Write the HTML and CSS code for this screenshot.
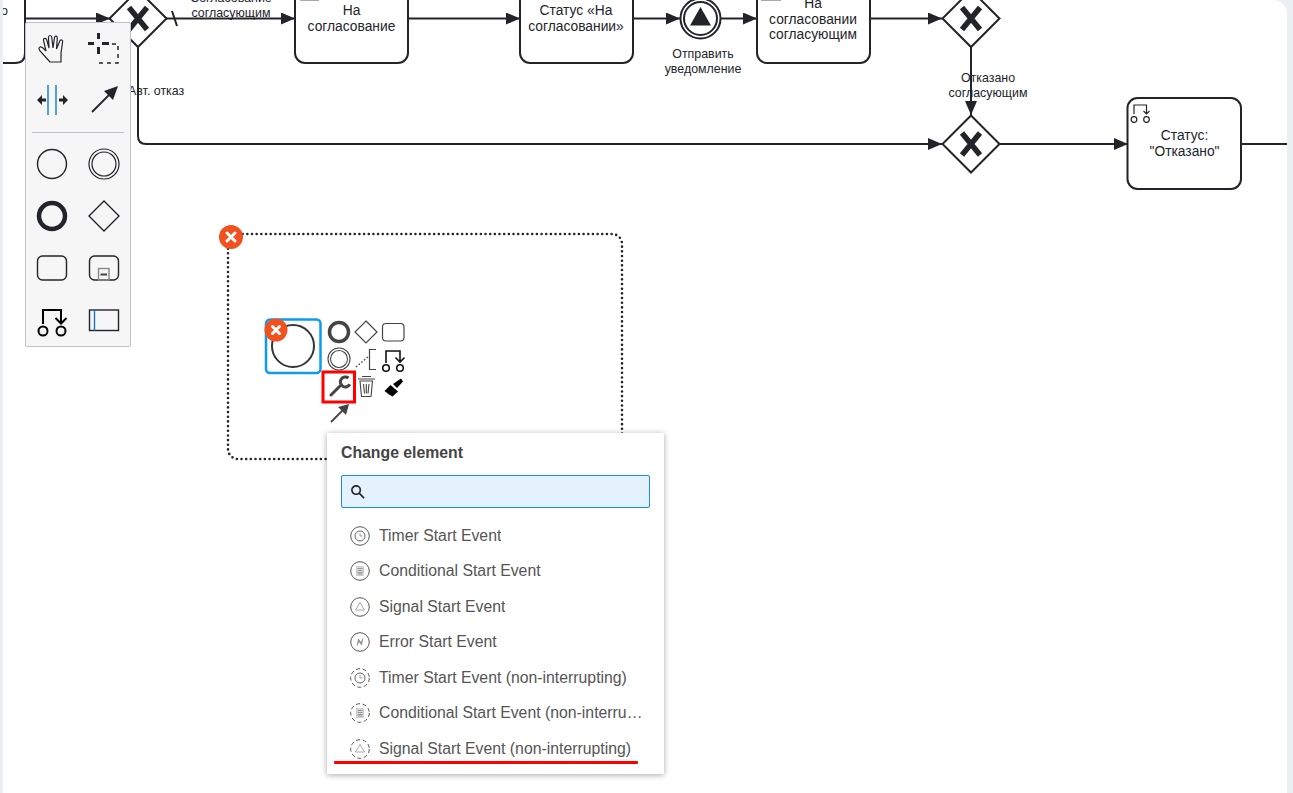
FILE: index.html
```html
<!DOCTYPE html>
<html lang="ru">
<head>
    <meta charset="UTF-8">
    <title>Change element</title>
    <link rel="stylesheet" href="styles.css">
</head>
<body>

<svg class="defs" width="0" height="0">
    <defs>
        <marker id="arrow" viewBox="0 0 14 12" refX="14" refY="6" markerWidth="14" markerHeight="12" markerUnits="userSpaceOnUse" orient="auto">
            <path d="M0 0 L14 6 L0 12 Z" fill="#22242a"/>
        </marker>
        <symbol id="ring" viewBox="0 0 20 20"><circle cx="10" cy="10" r="9.3" fill="none" stroke="#555" stroke-width="1"/></symbol>
        <symbol id="ring-dash" viewBox="0 0 20 20"><circle cx="10" cy="10" r="9.3" fill="none" stroke="#555" stroke-width="1" stroke-dasharray="4 2.6"/></symbol>
        <symbol id="timer" viewBox="0 0 20 20"><circle cx="10" cy="10" r="5" fill="none" stroke="#666" stroke-width="1"/><path d="M10 7 V10 H12.5" fill="none" stroke="#888" stroke-width=".8"/></symbol>
        <symbol id="cond" viewBox="0 0 20 20"><rect x="6.5" y="5.5" width="7" height="9" fill="#ddd" stroke="#bbb" stroke-width=".6"/><path d="M7.5 7.5 H12.5 M7.5 9.5 H12.5 M7.5 11.5 H12.5 M7.5 13 H12.5" stroke="#777" stroke-width=".7"/></symbol>
        <symbol id="signal" viewBox="0 0 20 20"><path d="M10 5.5 L14.5 13 H5.500 Z" fill="none" stroke="#aaa" stroke-width="1"/></symbol>
        <symbol id="error" viewBox="0 0 20 20"><path d="M7 13.500 L8.500 7 L11 10.500 L13 6.500 L11.500 13 L9 9.500 Z" fill="#999" stroke="#777" stroke-width=".5"/></symbol>
    </defs>
</svg>

<div class="canvas">

    <svg class="diagram" width="1284" height="793" viewBox="3 0 1284 793">
        <g class="shape">
            <path d="M25 -10 V53 Q25 63 15 63 H3"/>
            <rect x="295" y="-30" width="113" height="93" rx="10"/>
            <rect x="520" y="-30" width="113" height="93" rx="10"/>
            <rect x="757" y="-30" width="113" height="93" rx="10"/>
            <rect x="1127.500" y="98" width="113.500" height="91" rx="10"/>
            <path d="M138 -10 L166.500 18.500 L138 47 L109.500 18.500 Z"/>
            <path d="M971 -10 L999.500 18.500 L971 47 L942.500 18.500 Z"/>
            <path d="M971 115.500 L999.500 144 L971 172.500 L942.500 144 Z"/>
            <circle cx="700.500" cy="18.500" r="20"/>
            <circle cx="700.500" cy="18.500" r="16.500"/>
        </g>
        <path d="M690 25.500 L700.500 7 L711 25.500 Z" fill="#22242a"/>

        <g class="flow">
            <path d="M25 18.500 H110" marker-end="url(#arrow)"/>
            <path d="M166 18.500 H295" marker-end="url(#arrow)"/>
            <path d="M172 11 L177 26"/>
            <path d="M408 18.500 H520" marker-end="url(#arrow)"/>
            <path d="M633 18.500 H680" marker-end="url(#arrow)"/>
            <path d="M721 18.500 H757" marker-end="url(#arrow)"/>
            <path d="M870 18.500 H942" marker-end="url(#arrow)"/>
            <path d="M971 47 V115" marker-end="url(#arrow)"/>
            <path d="M138 46 V136 Q138 144 146 144 H942" marker-end="url(#arrow)"/>
            <path d="M999 144 H1128" marker-end="url(#arrow)"/>
            <path d="M1241 144 H1287"/>
        </g>

        <g class="cross">
            <path d="M129 7.500 L147 29.500 M147 7.500 L129 29.500"/>
            <path d="M962 7.500 L980 29.500 M980 7.500 L962 29.500"/>
            <path d="M962 133 L980 155 M980 133 L962 155"/>
        </g>

        <path d="M300 .5 H319 M761 .5 H781" stroke="#aaa" stroke-width="1"/>

        <!-- маленькая иконка в статусе -->
        <g fill="none" stroke="#22242a" stroke-width="1.200">
            <circle cx="1134" cy="119.500" r="2.800"/>
            <circle cx="1146.500" cy="119.500" r="2.800"/>
            <path d="M1134 114 V105 H1146.500 V114 M1143.500 111 L1146.500 114 L1149.500 111"/>
        </g>

        <g class="task-text">
            <text x="1" y="15" class="label">о</text>
            <text x="351.500" y="15" text-anchor="middle">На</text>
            <text x="351.500" y="31" text-anchor="middle">согласование</text>
            <text x="576" y="15" text-anchor="middle">Статус «На</text>
            <text x="576" y="31" text-anchor="middle">согласовании»</text>
            <text x="813" y="8" text-anchor="middle">На</text>
            <text x="813" y="24" text-anchor="middle">согласовании</text>
            <text x="813" y="39" text-anchor="middle">согласующим</text>
            <text x="1184.500" y="140" text-anchor="middle">Статус:</text>
            <text x="1184.500" y="156" text-anchor="middle">"Отказано"</text>
        </g>
        <g class="label">
            <text x="231" y="2" text-anchor="middle">Согласование</text>
            <text x="231" y="17" text-anchor="middle">согласующим</text>
            <text x="128" y="95">Авт. отказ</text>
            <text x="703" y="58" text-anchor="middle">Отправить</text>
            <text x="703" y="73" text-anchor="middle">уведомление</text>
            <text x="988" y="82" text-anchor="middle">Отказано</text>
            <text x="988" y="97" text-anchor="middle">согласующим</text>
        </g>

        <!-- подпроцесс -->
        <rect x="228" y="234" width="394" height="225" rx="10" class="dotted"/>
        <circle cx="231" cy="237" r="12" fill="#f1511e"/>
        <path d="M227 233 L235 241 M235 233 L227 241" stroke="#fff" stroke-width="3" stroke-linecap="round"/>

        <rect x="266" y="319.500" width="54.500" height="53.500" rx="4" fill="none" stroke="#0d9bf2" stroke-width="2.500"/>
        <circle cx="293" cy="346" r="21" fill="#fff" stroke="#33363c" stroke-width="2"/>
        <circle cx="276" cy="330" r="11.500" fill="#f1511e"/>
        <path d="M272.500 326.500 L279.500 333.500 M279.500 326.500 L272.500 333.500" stroke="#fff" stroke-width="3" stroke-linecap="round"/>

        <!-- контекстное меню элемента -->
        <circle cx="339" cy="332" r="9.500" fill="none" stroke="#444" stroke-width="3.500"/>
        <path d="M366 321 L377 332 L366 343 L355 332 Z" fill="none" stroke="#444" stroke-width="1.200"/>
        <rect x="382.500" y="323.500" width="21.500" height="17.500" rx="3.500" fill="none" stroke="#444" stroke-width="1.200"/>
        <circle cx="339" cy="359" r="11" fill="none" stroke="#444" stroke-width="1.100"/>
        <circle cx="339" cy="359" r="8.500" fill="none" stroke="#444" stroke-width="1.100"/>
        <path d="M356 367 L369 356" stroke="#444" stroke-width="1.500" stroke-dasharray="1.500 2"/>
        <path d="M376 349.500 H369.500 V369.500 H376" fill="none" stroke="#444" stroke-width="1.200"/>
        <g fill="none" stroke="#111" stroke-width="1.600">
            <circle cx="386" cy="368" r="3.300"/>
            <circle cx="400" cy="368" r="3.300"/>
            <path d="M386 363 V351 H400 V361 M395.500 357.500 L400 362 L404.500 357.500"/>
        </g>
        <path d="M331 395 L340 386" stroke="#444" stroke-width="3" stroke-linecap="round"/>
        <path d="M348.500 378 A5 5 0 1 0 349.800 384.200" fill="none" stroke="#444" stroke-width="3"/>
        <rect x="323" y="372" width="31.500" height="30" fill="none" stroke="#f00" stroke-width="3"/>
        <g fill="none" stroke="#444" stroke-width="1.100">
            <path d="M360 381 L361.500 396.500 H371 L372.500 381 Z"/>
            <path d="M358 379 H375 M362 376.500 H371 M363.500 384 L364.500 393.500 M366.300 384 V393.500 M369 384 L368 393.500"/>
        </g>
        <path d="M384.500 391 L390.500 385 L398 391.500 L392.500 396.500 L389 394.500 Z" fill="#000"/>
        <path d="M393 384 L397 388 L403 381.500 L401 378.500 Z" fill="#000"/>
        <path d="M331 422 L344 409" stroke="#444" stroke-width="1.800"/>
        <path d="M349 404 L346 415 L338 407 Z" fill="#444"/>
    </svg>

    <div class="palette">
        <div class="palette-group">
            <svg viewBox="0 0 52 48" fill="none" stroke="#22242a" stroke-width="1.200"><path d="M24 39 L14 28 Q12 24.500 14 24 Q16 23.500 20 28 L17.500 17.500 Q17.200 15.500 18.800 15.300 Q20.200 15.200 20.800 17 L23 25 L22.500 14.500 Q22.500 12.500 24 12.500 Q25.500 12.500 25.800 14.500 L27 25 L28.500 14.500 Q28.800 13 30.200 13.200 Q31.500 13.500 31.300 15.200 L30.500 26 L33.800 18 Q34.400 16.500 35.800 17 Q37 17.500 36.600 19 L35 30 L35 39 Z"/></svg>
            <svg viewBox="0 0 52 48" fill="none" stroke="#22242a"><path d="M10 20.500 H16 M24 20.500 H31 M20.500 10 V16 M20.500 24 V31" stroke-width="3"/><path d="M21 40 H40 V21 H33" stroke-width="1.500" stroke-dasharray="4 4"/></svg>
            <svg viewBox="0 0 52 48" fill="#22242a" stroke="none"><path d="M22 10 V40 M30 10 V40" stroke="#1d84c9" stroke-width="1.500"/><path d="M11 25 L16 20 V23.500 H20 V26.500 H16 V30 Z M42 25 L37 20 V23.500 H33 V26.500 H37 V30 Z"/></svg>
            <svg viewBox="0 0 52 48" fill="#22242a" stroke="none"><path d="M14 37 L32 19" stroke="#22242a" stroke-width="1.800"/><path d="M40 11 L35 25 L26 16 Z"/></svg>
        </div>
        <div class="palette-sep"></div>
        <div class="palette-group">
            <svg viewBox="0 0 52 48" fill="none" stroke="#22242a" stroke-width="1.400"><circle cx="26" cy="24" r="14.500"/></svg>
            <svg viewBox="0 0 52 48" fill="none" stroke="#22242a" stroke-width="1.200"><circle cx="26" cy="24" r="15"/><circle cx="26" cy="24" r="12"/></svg>
            <svg viewBox="0 0 52 48" fill="none" stroke="#22242a" stroke-width="4.500"><circle cx="26" cy="24" r="13"/></svg>
            <svg viewBox="0 0 52 48" fill="none" stroke="#22242a" stroke-width="1.400"><path d="M26 9 L41 24 L26 39 L11 24 Z"/></svg>
            <svg viewBox="0 0 52 48" fill="none" stroke="#22242a" stroke-width="1.400"><rect x="11.500" y="12" width="29" height="24" rx="5"/></svg>
            <svg viewBox="0 0 52 48" fill="none" stroke="#22242a" stroke-width="1.400"><rect x="11.500" y="12" width="29" height="24" rx="5"/><rect x="20.500" y="24.500" width="10.500" height="11.500" stroke="#888"/><path d="M22.500 30.500 H29" stroke="#444" stroke-width="2"/></svg>
            <svg viewBox="0 0 52 48" fill="none" stroke="#000" stroke-width="2"><circle cx="17" cy="35" r="4.500"/><circle cx="35" cy="35" r="4.500"/><path d="M17 28 V14 H35 V27 M29.500 22 L35 27.500 L40.500 22"/></svg>
            <svg viewBox="0 0 52 48" fill="none" stroke="#22242a" stroke-width="1.400"><rect x="11.500" y="14" width="29" height="20.500"/><path d="M16.500 14 V34.500" stroke="#1d6fc9"/></svg>
        </div>
    </div>

    <div class="popup">
        <div class="popup-title">Change element</div>
        <div class="popup-search">
            <svg width="15" height="15" viewBox="0 0 16 16" fill="none" stroke="#222" stroke-width="1.700"><circle cx="6.500" cy="6.500" r="4.500"/><path d="M10 10 L15 15"/></svg>
        </div>
        <ul class="popup-list">
            <li><svg width="20" height="20"><use href="#ring"/><use href="#timer"/></svg><span>Timer Start Event</span></li>
            <li><svg width="20" height="20"><use href="#ring"/><use href="#cond"/></svg><span>Conditional Start Event</span></li>
            <li><svg width="20" height="20"><use href="#ring"/><use href="#signal"/></svg><span>Signal Start Event</span></li>
            <li><svg width="20" height="20"><use href="#ring"/><use href="#error"/></svg><span>Error Start Event</span></li>
            <li><svg width="20" height="20"><use href="#ring-dash"/><use href="#timer"/></svg><span>Timer Start Event (non-interrupting)</span></li>
            <li><svg width="20" height="20"><use href="#ring-dash"/><use href="#cond"/></svg><span>Conditional Start Event (non-interrupting)</span></li>
            <li><svg width="20" height="20"><use href="#ring-dash"/><use href="#signal"/></svg><span>Signal Start Event (non-interrupting)</span></li>
        </ul>
        <div class="red-line"></div>
    </div>

</div>

</body>
</html>
```

FILE: styles.css
```css
html, body {
    margin: 0;
    height: 100%;
    overflow: hidden;
}
body {
    background-color: #e9eff2;
    font-family: "Liberation Sans", Arial, sans-serif;
}
.defs {
    position: absolute;
}
.canvas {
    position: relative;
    margin: 0 6px 0 3px;
    height: 793px;
    background-color: #fff;
    border-top-right-radius: 14px;
    overflow: hidden;
}
.diagram {
    position: absolute;
    left: 0;
    top: 0;
}
.diagram text {
    fill: #22242a;
}
.shape {
    fill: #fff;
    stroke: #22242a;
    stroke-width: 2;
}
.flow {
    fill: none;
    stroke: #22242a;
    stroke-width: 2;
}
.cross {
    fill: none;
    stroke: #22242a;
    stroke-width: 5.5;
}
.task-text {
    font-size: 13.8px;
}
.label {
    font-size: 12.4px;
}
.dotted {
    fill: none;
    stroke: #22242a;
    stroke-width: 2.6;
    stroke-linecap: round;
    stroke-dasharray: 0 4.67;
}

.palette {
    position: absolute;
    left: 22px;
    top: 22px;
    width: 104px;
    height: 322px;
    padding-bottom: 1px;
    background-color: #f6f6f6;
    border: 1px solid #c0c0cc;
    border-radius: 2px;
}
.palette-group {
    display: grid;
    grid-template-columns: 52px 52px;
    grid-auto-rows: 48px;
    row-gap: 4px;
}
.palette-group svg {
    width: 52px;
    height: 48px;
}
.palette-sep {
    height: 1px;
    margin: 9px 6px 7px;
    background-color: #c0c0cc;
}

.popup {
    position: absolute;
    left: 324px;
    top: 433px;
    box-sizing: border-box;
    width: 337px;
    height: 341px;
    padding: 0 14px;
    background-color: #fff;
    box-shadow: 0 1px 6px rgba(0, 0, 0, 0.35);
    color: #555;
}
.popup-title {
    padding-top: 11px;
    font-size: 15.8px;
    line-height: 18px;
    font-weight: bold;
    color: #444;
}
.popup-search {
    display: flex;
    align-items: center;
    box-sizing: border-box;
    height: 33px;
    margin-top: 13px;
    padding-left: 8px;
    background-color: #e4f2fd;
    border: 1px solid #1b8ae8;
    border-radius: 2px;
}
.popup-list {
    list-style: none;
    margin: 10px 0 0;
    padding: 0;
}
.popup-list li {
    display: flex;
    align-items: center;
    gap: 9px;
    height: 35.5px;
    padding-left: 9px;
    font-size: 15.8px;
}
.popup-list svg {
    flex: none;
}
.popup-list span {
    overflow: hidden;
    white-space: nowrap;
    text-overflow: ellipsis;
    max-width: 266px;
}
.red-line {
    position: absolute;
    left: 7px;
    top: 328px;
    width: 304px;
    height: 3px;
    border-radius: 1px;
    background-color: #f00;
}
```
